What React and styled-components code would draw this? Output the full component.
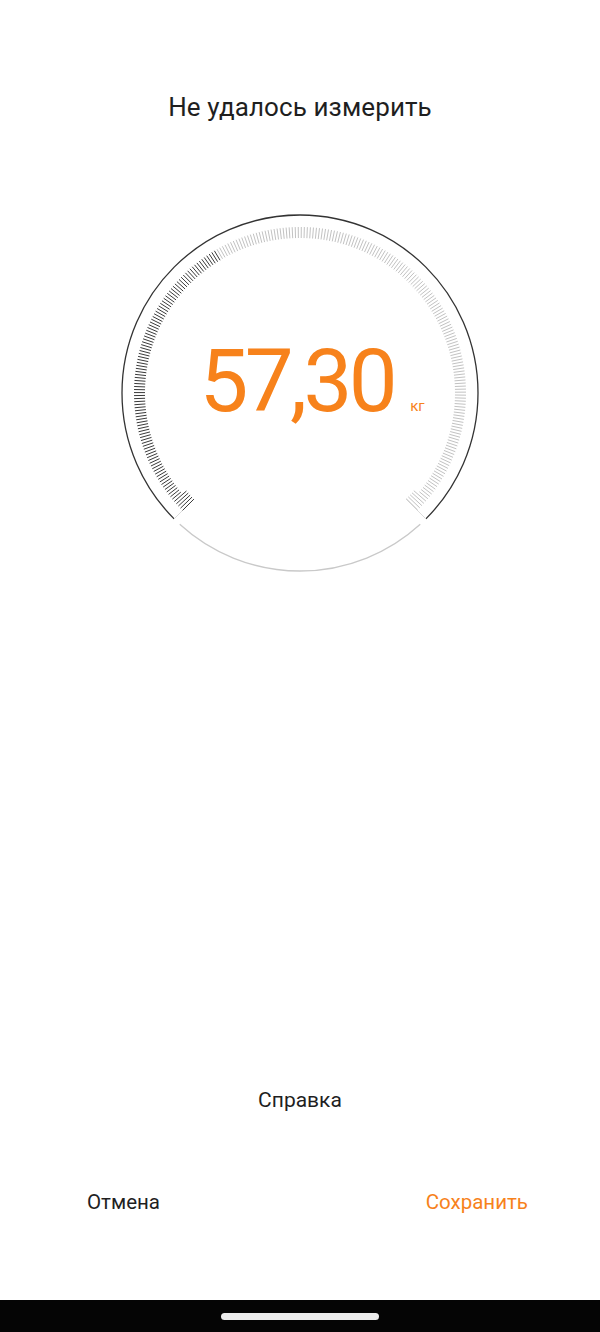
import React from "react";
import styled, { createGlobalStyle } from "styled-components";

const GlobalStyle = createGlobalStyle`
    html, body {
        margin: 0;
        padding: 0;
        background: #fff;
    }
    body {
        font-family: Roboto, "Noto Sans", "Liberation Sans", sans-serif;
    }
`;

const ORANGE = "#f7821b";

/* gauge geometry */
const CX = 190;
const CY = 190;
const R = 178;
const TICK_IN = 155;
const TICK_OUT = 166;
const TICK_LONG_IN = 150;
const FILLED_TO = -31;

const polar = (r, deg) => {
    const a = (deg * Math.PI) / 180;
    return [CX + r * Math.sin(a), CY - r * Math.cos(a)];
};

const arcPath = (r, from, to) => {
    const [x1, y1] = polar(r, from);
    const [x2, y2] = polar(r, to);
    const large = to - from > 180 ? 1 : 0;
    return `M ${x1} ${y1} A ${r} ${r} 0 ${large} 1 ${x2} ${y2}`;
};

const Gauge = () => {
    const ticks = [];
    for (let deg = -135; deg <= 135; deg += 1.05) {
        const isEnd = deg <= -130 || deg >= 130;
        const [x1, y1] = polar(isEnd ? TICK_LONG_IN : TICK_IN, deg);
        const [x2, y2] = polar(TICK_OUT, deg);
        ticks.push(
            <line
                key={deg}
                x1={x1}
                y1={y1}
                x2={x2}
                y2={y2}
                stroke={deg <= FILLED_TO ? "#3a3a3a" : "#c2c2c2"}
                strokeWidth="1"
            />
        );
    }
    const [la1, lb1] = polar(R, -135);
    const [la2, lb2] = polar(TICK_LONG_IN, -135);
    const [ra1, rb1] = polar(R, 135);
    const [ra2, rb2] = polar(TICK_LONG_IN, 135);

    return (
        <GaugeBox>
            <svg width="380" height="380" viewBox="0 0 380 380">
                <path d={arcPath(R, -135, 135)} fill="none" stroke="#333" strokeWidth="1.3" />
                <path d={arcPath(R, 137.5, 222.5)} fill="none" stroke="#c9c9c9" strokeWidth="1.3" />
                <line x1={la1} y1={lb1} x2={la2} y2={lb2} stroke="#dcdcdc" strokeWidth="1" />
                <line x1={ra1} y1={rb1} x2={ra2} y2={rb2} stroke="#dcdcdc" strokeWidth="1" />
                {ticks}
            </svg>
            <Reading>
                <Value>57,30</Value>
                <Unit>кг</Unit>
            </Reading>
        </GaugeBox>
    );
};

const App = () => (
    <>
        <GlobalStyle />
        <Screen>
            <Title>Не удалось измерить</Title>
            <Gauge />
            <Spacer />
            <HelpLink>Справка</HelpLink>
            <Actions>
                <ActionButton>Отмена</ActionButton>
                <ActionButton accent>Сохранить</ActionButton>
            </Actions>
            <NavBar>
                <HomePill />
            </NavBar>
        </Screen>
    </>
);

const Screen = styled.div`
    width: 600px;
    height: 1332px;
    display: flex;
    flex-direction: column;
    align-items: center;
    background: #fff;
    overflow: hidden;
`;

const Title = styled.div`
    margin-top: 91px;
    font-size: 26px;
    line-height: 32px;
    color: #1f1f1f;
    letter-spacing: 0.1px;
`;

const GaugeBox = styled.div`
    position: relative;
    width: 380px;
    height: 380px;
    margin-top: 80px;
    svg {
        display: block;
    }
`;

const Reading = styled.div`
    position: absolute;
    left: 0;
    right: 0;
    top: 128px;
    display: flex;
    justify-content: center;
    align-items: baseline;
    padding-left: 24px;
    color: ${ORANGE};
`;

const Value = styled.span`
    font-size: 87px;
    line-height: 100px;
    letter-spacing: -3.6px;
`;

const Unit = styled.span`
    font-size: 15px;
    margin-left: 16px;
`;

const Spacer = styled.div`
    flex: 1;
`;

const HelpLink = styled.div`
    font-size: 21px;
    line-height: 28px;
    color: #1f1f1f;
`;

const Actions = styled.div`
    align-self: stretch;
    display: flex;
    justify-content: space-between;
    margin-top: 74px;
    margin-bottom: 84px;
    padding: 0 72px 0 87px;
`;

const ActionButton = styled.div`
    font-size: 20.5px;
    line-height: 28px;
    color: ${({ accent }) => (accent ? ORANGE : "#1f1f1f")};
`;

const NavBar = styled.div`
    align-self: stretch;
    height: 32px;
    background: #050505;
    display: flex;
    justify-content: center;
    align-items: center;
`;

const HomePill = styled.div`
    width: 158px;
    height: 7px;
    border-radius: 4px;
    background: #ececec;
`;

export default App;
